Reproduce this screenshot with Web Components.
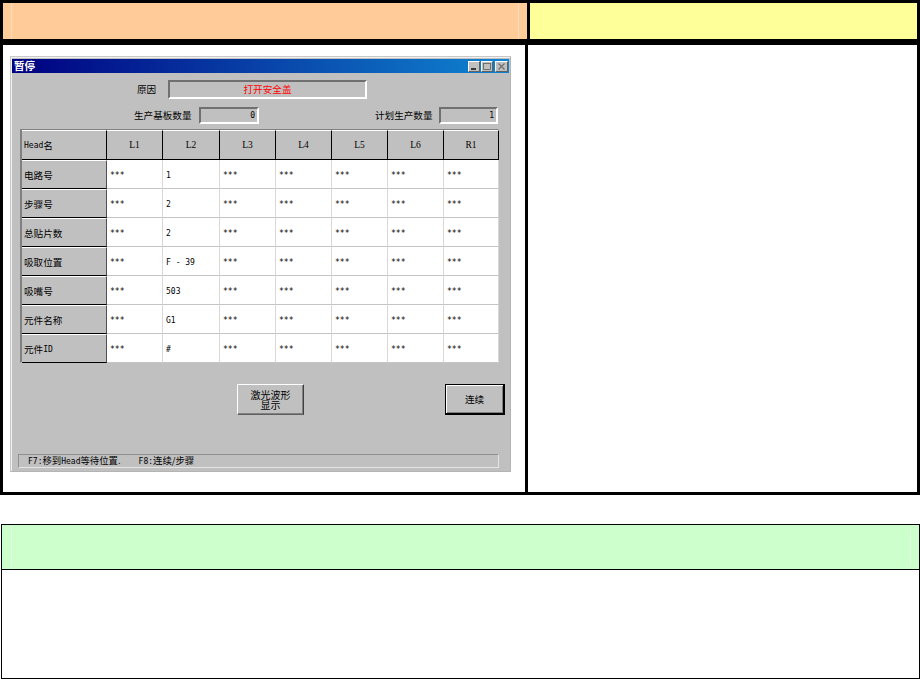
<!DOCTYPE html>
<html lang="zh">
<head>
<meta charset="utf-8">
<title>暂停</title>
<style>
  html, body { margin: 0; background: #fff; }
  body { font-family: "Liberation Mono", "Noto Sans CJK SC", monospace; font-size: 10px; color: #000; }
</style>
</head>
<body>
<spec-sheet>
  <hmi-window slot="screen" heading="暂停">
    <form-row reason="打开安全盖" made="0" planned="1"></form-row>
    <head-table></head-table>
    <button-row></button-row>
    <status-bar></status-bar>
  </hmi-window>
</spec-sheet>
<note-box></note-box>

<script>
  const CJK = '"Noto Sans CJK SC", sans-serif';
  const LATIN = '"DejaVu Sans Mono", "Noto Sans CJK SC", monospace';

  // latin runs are set smaller than the chinese next to them
  const mixed = text => text.replace(/[\x21-\x7e]+( - [\x21-\x7e]+)?/g, '<small>$&</small>');

  class SpecSheet extends HTMLElement {
    constructor() {
      super();
      this.attachShadow({ mode: 'open' }).innerHTML = `
        <style>
          :host { display: block; width: 920px; height: 495px; box-sizing: border-box; background: #000; padding: 3px; }
          .heads { display: flex; height: 36px; }
          .peach { width: 524px; background: #fc9; box-sizing: border-box; padding: 0 8px; display: flex; }
          .peach i { flex: 1; border: solid #ffdcb8; border-width: 0 1px; }
          .yellow { width: 387px; margin-left: 3px; background: #ff9; }
          .bodies { display: flex; height: 447px; margin-top: 6px; }
          .main { width: 522px; background: #fff; box-sizing: border-box; padding: 11px 0 0 7px; }
          .side { width: 389px; margin-left: 3px; background: #fff; }
        </style>
        <div class="heads">
          <div class="peach"><i></i></div>
          <div class="yellow"></div>
        </div>
        <div class="bodies">
          <div class="main"><slot name="screen"></slot></div>
          <div class="side"></div>
        </div>`;
    }
  }

  class HmiWindow extends HTMLElement {
    constructor() {
      super();
      this.attachShadow({ mode: 'open' }).innerHTML = `
        <style>
          :host { display: block; width: 501px; height: 416px; box-sizing: border-box; background: #c0c0c0;
                  border: 1px solid #b4b4b4; border-top-color: #c8c8c8; border-left-color: #c8c8c8;
                  box-shadow: inset 1px 1px 0 #f0f0f0; padding: 2px 1px 0 1px; }
          .bar { display: flex; align-items: center; height: 14px; box-sizing: border-box;
                 background: linear-gradient(90deg, #000080, #1084d0); color: #fff; padding: 0 1px 0 2px; }
          .name { flex: 1; font: bold 10.5px/14px ${CJK}; }
          .btn { width: 12px; height: 11px; background: #c0c0c0; margin-left: 1px; box-sizing: border-box;
                 border: 1px solid; border-color: #fff #606060 #606060 #fff; display: block; }
          .btn:last-child { width: 13px; margin-left: 2px; }
          .btn svg { display: block; }
        </style>
        <div class="bar">
          <span class="name"></span>
          <span class="btn"><svg width="10" height="9"><path d="M2 7h5" stroke="#000" stroke-width="1.4"/></svg></span>
          <span class="btn"><svg width="10" height="9"><path d="M1.5 1.5h7v6h-7z" fill="none" stroke="#707070"/><path d="M1 1.5h8" stroke="#707070"/></svg></span>
          <span class="btn"><svg width="11" height="9"><path d="M2.5 1.5l6 6M8.5 1.5l-6 6" stroke="#707070" stroke-width="1.3"/></svg></span>
        </div>
        <slot></slot>`;
    }
    connectedCallback() {
      this.shadowRoot.querySelector('.name').textContent = this.getAttribute('heading');
    }
  }

  class FormRow extends HTMLElement {
    constructor() {
      super();
      this.attachShadow({ mode: 'open' }).innerHTML = `
        <style>
          :host { display: block; font: 9.6px/1 ${CJK}; }
          .reason { display: flex; align-items: center; height: 19px; margin-top: 7px; padding-left: 125px; }
          .reason span { width: 31px; }
          .field { box-sizing: border-box; border: 2px solid; border-color: #707070 #fff #fff #707070;
                   display: flex; align-items: center; }
          .reason .field { width: 199px; height: 19px; justify-content: center; color: #f00; }
          .counts { display: flex; align-items: center; height: 17px; margin-top: 8px; padding-left: 122px; }
          .counts .label { width: 65px; white-space: nowrap; }
          .counts .field { height: 17px; justify-content: flex-end; padding-right: 2px; font: 8px/1 ${LATIN}; }
        </style>
        <div class="reason"><span>原因</span><div class="field" id="why"></div></div>
        <div class="counts">
          <span class="label">生产基板数量</span>
          <div class="field" id="made" style="width:60px"></div>
          <span class="label" style="margin-left:116px;width:64px">计划生产数量</span>
          <div class="field" id="planned" style="width:59px"></div>
        </div>`;
    }
    connectedCallback() {
      const root = this.shadowRoot;
      root.getElementById('why').textContent = this.getAttribute('reason');
      root.getElementById('made').textContent = this.getAttribute('made');
      root.getElementById('planned').textContent = this.getAttribute('planned');
    }
  }

  const heads = ['Head名', 'L1', 'L2', 'L3', 'L4', 'L5', 'L6', 'R1'];
  const rows = [
    ['电路号', '***', '1', '***', '***', '***', '***', '***'],
    ['步骤号', '***', '2', '***', '***', '***', '***', '***'],
    ['总贴片数', '***', '2', '***', '***', '***', '***', '***'],
    ['吸取位置', '***', 'F - 39', '***', '***', '***', '***', '***'],
    ['吸嘴号', '***', '503', '***', '***', '***', '***', '***'],
    ['元件名称', '***', 'G1', '***', '***', '***', '***', '***'],
    ['元件ID', '***', '#', '***', '***', '***', '***', '***'],
  ];

  class HeadTable extends HTMLElement {
    constructor() {
      super();
      this.attachShadow({ mode: 'open' }).innerHTML = `
        <style>
          :host { display: block; width: 479px; height: 234px; margin: 5px 0 0 8px; box-sizing: border-box;
                  border: solid; border-width: 1px 1px 1px 2px; border-color: #808080 #e0e0e0 #e0e0e0 #808080; }
          .grid { display: grid; grid-template-columns: 85px 56px 57px 56px 56px 56px 56px 55px;
                  grid-template-rows: 30px repeat(7, 29px); font: 8px/1 ${LATIN}; }
          .grid > div { display: flex; align-items: center; box-sizing: border-box; overflow: hidden; white-space: pre; padding-top: 2px; }
          .hd { background: #c0c0c0; justify-content: center; border: solid; border-width: 1px 1px 1px 0;
                border-color: #fff #000 #000 #fff; font-family: "Liberation Serif", serif; font-size: 9.5px; }
          .hd.first { justify-content: flex-start; padding-left: 2px; font: 9.6px/1 ${CJK}; }
          .rh { background: #c0c0c0; border: solid; border-width: 1px 1px 1px 0; border-color: #fff #505050 #000 #fff;
                padding-left: 2px; font: 9.6px/1 ${CJK}; }
          .grid > .td { background: #fff; border: solid; border-color: #c4c4c4 #d8d8d8; border-width: 0 1px 1px 0;
                        padding: 3px 0 0 3px; }
          small { font: 8px/1 ${LATIN}; }
        </style>
        <div class="grid"></div>`;
      const grid = this.shadowRoot.querySelector('.grid');
      heads.forEach((text, i) => {
        const cell = document.createElement('div');
        cell.className = i ? 'hd' : 'hd first';
        if (i) cell.textContent = text;
        else cell.innerHTML = mixed(text);
        grid.appendChild(cell);
      });
      rows.forEach(row => {
        row.forEach((text, i) => {
          const cell = document.createElement('div');
          cell.className = i ? 'td' : 'rh';
          if (i) cell.textContent = text;
          else cell.innerHTML = mixed(text);
          grid.appendChild(cell);
        });
      });
    }
  }

  class ButtonRow extends HTMLElement {
    constructor() {
      super();
      this.attachShadow({ mode: 'open' }).innerHTML = `
        <style>
          :host { display: flex; margin: 21px 0 0 225px; height: 31px; font: 9.6px/10px ${CJK}; }
          div { display: flex; align-items: center; justify-content: center; text-align: center; box-sizing: border-box; }
          .wave { width: 67px; font-size: 10px; border: 1px solid; border-color: #fff #404040 #606060 #fff; box-shadow: inset -1px -1px 0 #808080; }
          .go { width: 60px; margin-left: 141px; border: 1px solid #000; border-width: 1px 2px 2px 1px;
                box-shadow: inset 1px 1px 0 #fff, inset -1px -1px 0 #808080; }
        </style>
        <div class="wave">激光波形<br>显示</div>
        <div class="go">连续</div>`;
    }
  }

  class StatusBar extends HTMLElement {
    constructor() {
      super();
      this.attachShadow({ mode: 'open' }).innerHTML = `
        <style>
          :host { display: flex; align-items: center; width: 481px; height: 14px; margin: 39px 0 0 6px;
                  box-sizing: border-box; padding-left: 9px; border: 1px solid; border-color: #909090 #e4e4e4 #e4e4e4 #909090;
                  font: 9.4px/1 ${CJK}; white-space: pre; }
          small { font: 8px/1 ${LATIN}; }
          .f8 { margin-left: 18px; }
        </style>
        <span><small>F7:</small>移到<small>Head</small>等待位置.</span>
        <span class="f8"><small>F8:</small>连续/步骤</span>`;
    }
  }

  class NoteBox extends HTMLElement {
    constructor() {
      super();
      this.attachShadow({ mode: 'open' }).innerHTML = `
        <style>
          :host { display: block; width: 919px; height: 155px; margin: 29px 0 0 1px; box-sizing: border-box;
                  border: 1px solid #000; background: #fff; }
          .green { height: 45px; background: #cfc; border-bottom: 1px solid #000; box-sizing: border-box;
                   padding: 4px 8px 4px 9px; display: flex; }
          .green i { flex: 1; border: solid #e2ffe2; border-width: 0 1px; }
        </style>
        <div class="green"><i></i></div>`;
    }
  }

  customElements.define('spec-sheet', SpecSheet);
  customElements.define('hmi-window', HmiWindow);
  customElements.define('form-row', FormRow);
  customElements.define('head-table', HeadTable);
  customElements.define('button-row', ButtonRow);
  customElements.define('status-bar', StatusBar);
  customElements.define('note-box', NoteBox);
</script>
</body>
</html>
